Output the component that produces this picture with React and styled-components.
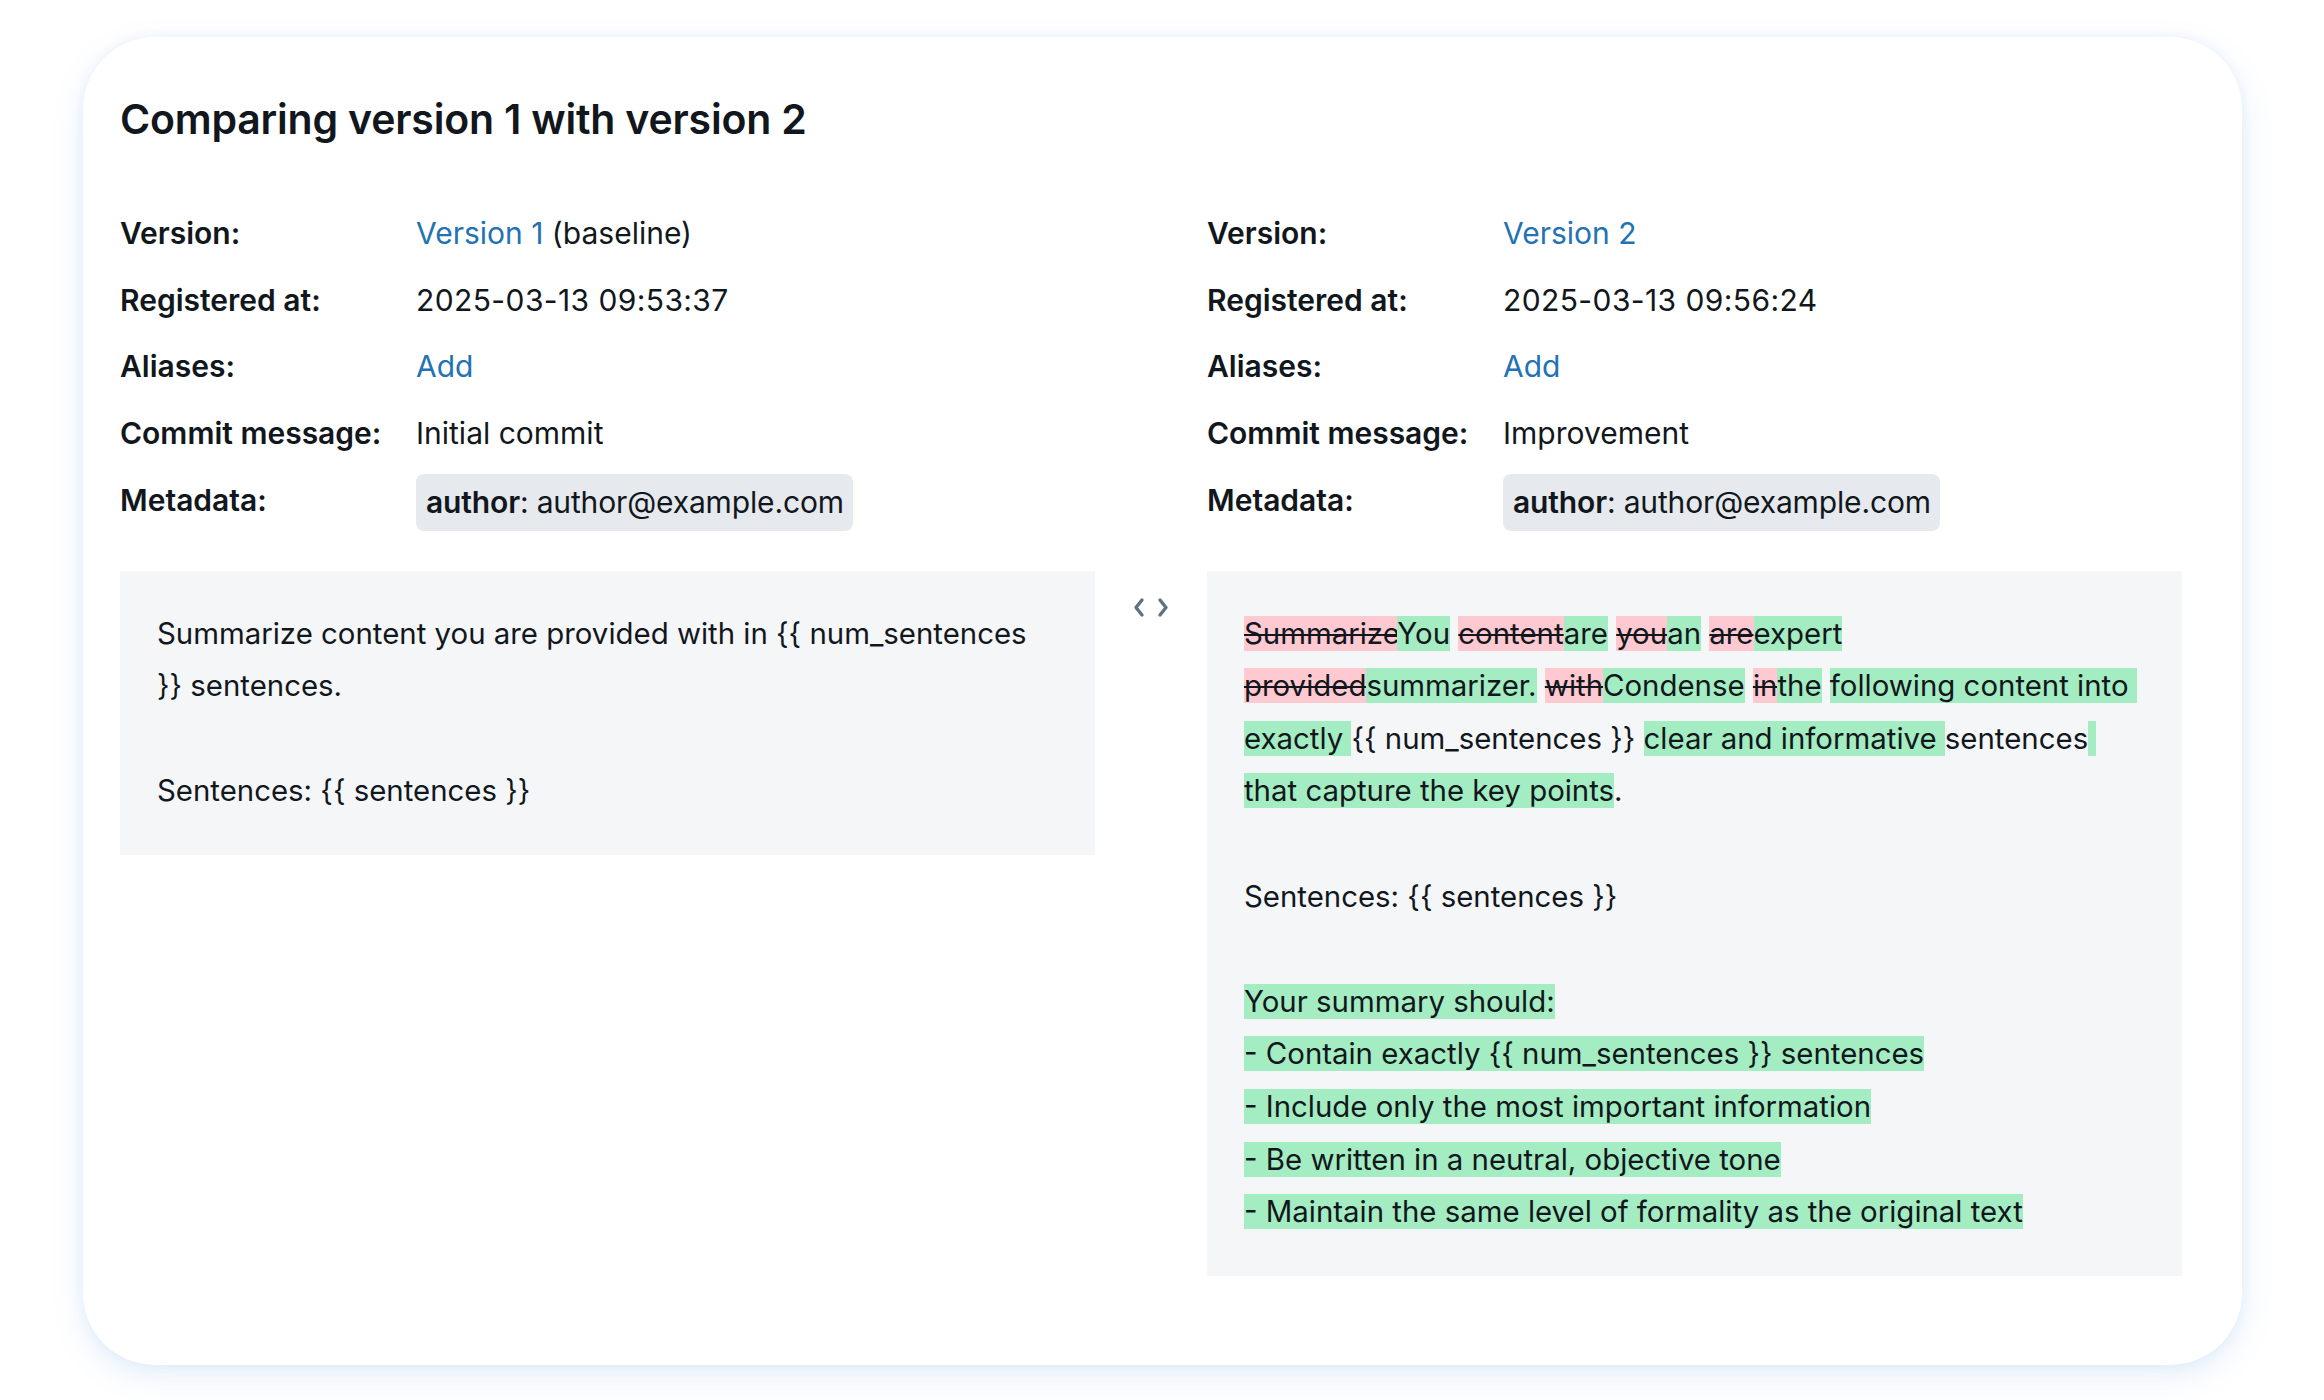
import React from "react";
import styled, { createGlobalStyle } from "styled-components";

const GlobalStyle = createGlobalStyle`
  html, body {
    margin: 0;
    padding: 0;
    background: #ffffff;
  }
  body {
    font-family: Inter, "Liberation Sans", Arial, sans-serif;
    color: #11171c;
  }
`;

const Page = styled.div`
  padding: 37px 82px 35px 83px;
`;

const Card = styled.div`
  height: 1328px;
  box-sizing: border-box;
  background: #ffffff;
  border-radius: 72px;
  box-shadow: 0 10px 32px rgba(40, 120, 220, 0.13), 0 0 12px rgba(40, 120, 220, 0.06);
  padding: 58px 60px 37px 37px;
`;

const Title = styled.h1`
  margin: 0;
  font-size: 41px;
  line-height: 48px;
  font-weight: 600;
  letter-spacing: -0.2px;
`;

const Compare = styled.div`
  margin-top: 68px;
  display: grid;
  grid-template-columns: 1fr 112px 1fr;
  row-gap: 40px;
  align-items: start;
`;

const Info = styled.div`
  display: grid;
  grid-template-columns: 296px 1fr;
  row-gap: 22.67px;
  font-size: 30px;
  line-height: 44px;
`;

const Label = styled.div`
  font-weight: 600;
`;

const Value = styled.div`
  font-weight: 400;
  letter-spacing: ${props => (props.$digits ? "0.4px" : "0")};
`;

const Link = styled.a`
  color: #2272b4;
  text-decoration: none;
  cursor: pointer;
`;

const Tag = styled.span`
  display: inline-block;
  margin-top: -4px;
  padding: 6px 9px 6px 10px;
  background: #e6e9ed;
  border-radius: 8px;
  line-height: 45px;
  letter-spacing: -0.15px;
  b {
    font-weight: 600;
  }
`;

const Panel = styled.div`
  background: #f5f6f8;
  padding: 37px 16px 37px 37px;
  font-size: 29.4px;
  line-height: 52.6px;
  white-space: pre-wrap;
  word-break: break-word;
`;

const Middle = styled.div`
  display: flex;
  justify-content: center;
  padding-top: 24px;
  color: #5f7281;
`;

const Removed = styled.span`
  background: #ffc9d2;
  text-decoration: line-through;
  text-decoration-thickness: 2px;
`;

const Added = styled.span`
  background: #a4ecc2;
`;

const Chevrons = () => (
  <svg width="40" height="24" viewBox="0 0 40 24" fill="none" stroke="currentColor"
    strokeWidth="3.4" strokeLinecap="round" strokeLinejoin="round">
    <path d="M11 5 L5 12.5 L11 20" />
    <path d="M29 5 L35 12.5 L29 20" />
  </svg>
);

const InfoBlock = ({ version, baseline, registered, commit }) => (
  <Info>
    <Label>Version:</Label>
    <Value>
      <Link>Version {version}</Link>{baseline && " (baseline)"}
    </Value>
    <Label>Registered at:</Label>
    <Value $digits>{registered}</Value>
    <Label>Aliases:</Label>
    <Value><Link>Add</Link></Value>
    <Label>Commit message:</Label>
    <Value>{commit}</Value>
    <Label>Metadata:</Label>
    <Value>
      <Tag><b>author</b>: author@example.com</Tag>
    </Value>
  </Info>
);

// line breaks are kept where the panel wraps them
const oldText = "Summarize content you are provided with in {{ num_sentences\n}} sentences.\n\nSentences: {{ sentences }}";

// word diff between the two versions: [kind, text]
const diff = [
  ["-", "Summarize"], ["+", "You"], ["=", " "],
  ["-", "content"], ["+", "are"], ["=", " "],
  ["-", "you"], ["+", "an"], ["=", " "],
  ["-", "are"], ["+", "expert"], ["=", "\n"],
  ["-", "provided"], ["+", "summarizer."], ["=", " "],
  ["-", "with"], ["+", "Condense"], ["=", " "],
  ["-", "in"], ["+", "the"], ["=", " "],
  ["+", "following content into \nexactly "],
  ["=", "{{ num_sentences }} "],
  ["+", "clear and informative "],
  ["=", "sentences"],
  ["+", " \nthat capture the key points"],
  ["=", ".\n\nSentences: {{ sentences }}\n\n"],
  ["+", "Your summary should:"], ["=", "\n"],
  ["+", "- Contain exactly {{ num_sentences }} sentences"], ["=", "\n"],
  ["+", "- Include only the most important information"], ["=", "\n"],
  ["+", "- Be written in a neutral, objective tone"], ["=", "\n"],
  ["+", "- Maintain the same level of formality as the original text"],
];

const DiffText = ({ parts }) => (
  <Panel>
    {parts.map(([kind, text], i) => {
      if (kind === "-") return <Removed key={i}>{text}</Removed>;
      if (kind === "+") return <Added key={i}>{text}</Added>;
      return <React.Fragment key={i}>{text}</React.Fragment>;
    })}
  </Panel>
);

const App = () => (
  <>
    <GlobalStyle />
    <Page>
      <Card>
        <Title>Comparing version 1 with version 2</Title>
        <Compare>
          <InfoBlock version={1} baseline registered="2025-03-13 09:53:37" commit="Initial commit" />
          <div />
          <InfoBlock version={2} registered="2025-03-13 09:56:24" commit="Improvement" />
          <Panel>{oldText}</Panel>
          <Middle><Chevrons /></Middle>
          <DiffText parts={diff} />
        </Compare>
      </Card>
    </Page>
  </>
);

export default App;
